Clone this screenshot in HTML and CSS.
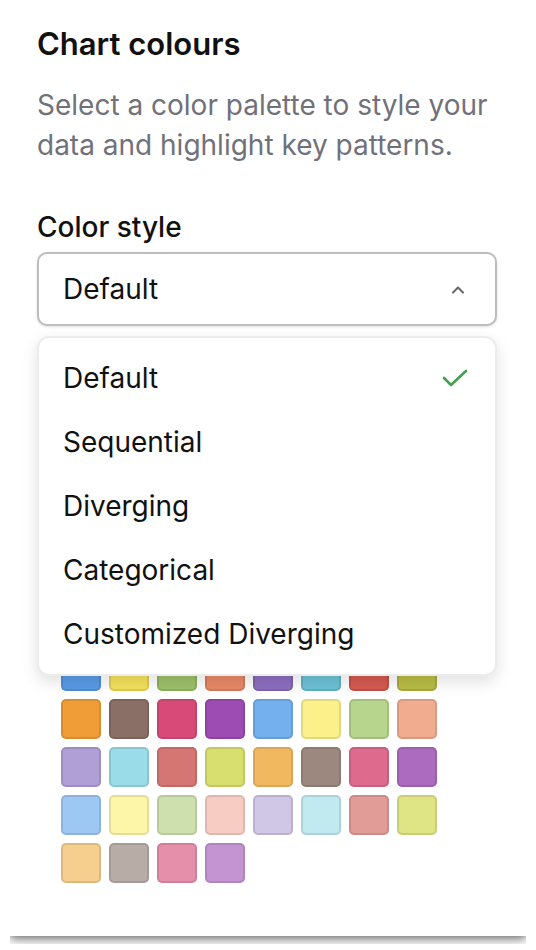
FILE: index.html
```html
<html>

<head>
  <meta name="viewport" content="width=device-width, initial-scale=1">
  <link rel="stylesheet" href="styles.css">
</head>

<body>
  <div class="panel">
    <h2 class="panel-title">Chart colours</h2>
    <p class="panel-desc">Select a color palette to style your data and highlight key patterns.</p>

    <div class="field-label">Color style</div>
    <div class="select">
      <button class="select-trigger">
        <span>Default</span>
        <svg class="chevron" width="14" height="9" viewBox="0 0 14 9">
          <path d="M2 7.5 L7 2.5 L12 7.5" fill="none" stroke="#666" stroke-width="2" stroke-linecap="round" stroke-linejoin="round" />
        </svg>
      </button>

      <ul class="select-menu">
        <li class="option selected">
          Default
          <svg class="check" width="28" height="20" viewBox="0 0 28 20">
            <path d="M3 10 L10 17 L25 3" fill="none" stroke="#43a04f" stroke-width="2.6" stroke-linecap="round" stroke-linejoin="round" />
          </svg>
        </li>
        <li class="option">Sequential</li>
        <li class="option">Diverging</li>
        <li class="option">Categorical</li>
        <li class="option">Customized Diverging</li>
      </ul>
    </div>

    <div class="swatches">
      <div class="swatch" style="background:#5a9be6"></div>
      <div class="swatch" style="background:#f5e35c"></div>
      <div class="swatch" style="background:#9dc16b"></div>
      <div class="swatch" style="background:#e98a68"></div>
      <div class="swatch" style="background:#8c6fc0"></div>
      <div class="swatch" style="background:#6cc3d5"></div>
      <div class="swatch" style="background:#d65a50"></div>
      <div class="swatch" style="background:#b9bd45"></div>

      <div class="swatch" style="background:#f09d38"></div>
      <div class="swatch" style="background:#8a6f66"></div>
      <div class="swatch" style="background:#d84b78"></div>
      <div class="swatch" style="background:#9d4cb3"></div>
      <div class="swatch" style="background:#74b0ee"></div>
      <div class="swatch" style="background:#fbf08a"></div>
      <div class="swatch" style="background:#b7d58c"></div>
      <div class="swatch" style="background:#f1ac90"></div>

      <div class="swatch" style="background:#b09fd6"></div>
      <div class="swatch" style="background:#9adce8"></div>
      <div class="swatch" style="background:#d57672"></div>
      <div class="swatch" style="background:#d8df6e"></div>
      <div class="swatch" style="background:#f2b860"></div>
      <div class="swatch" style="background:#9d8880"></div>
      <div class="swatch" style="background:#de6a8e"></div>
      <div class="swatch" style="background:#ac6bbf"></div>

      <div class="swatch" style="background:#9dc8f3"></div>
      <div class="swatch" style="background:#fdf6a9"></div>
      <div class="swatch" style="background:#cde0ae"></div>
      <div class="swatch" style="background:#f7cdc3"></div>
      <div class="swatch" style="background:#d0c6e6"></div>
      <div class="swatch" style="background:#c0eaf0"></div>
      <div class="swatch" style="background:#e29c98"></div>
      <div class="swatch" style="background:#dfe584"></div>

      <div class="swatch" style="background:#f6cf8e"></div>
      <div class="swatch" style="background:#b8aca7"></div>
      <div class="swatch" style="background:#e68fab"></div>
      <div class="swatch" style="background:#c494d2"></div>
    </div>
  </div>
</body>

</html>
```

FILE: styles.css
```css
body {
  margin: 6px 10px;
  background-color: white;
  font-family: Inter, "Noto Sans", sans-serif;
  color: #111;
}

.panel {
  height: 930px;
  box-sizing: border-box;
  padding: 21px 27px 0;
  background-color: white;
  box-shadow: 0 4px 10px rgba(0, 0, 0, 0.4), 0 0 7px rgba(0, 0, 0, 0.35);
}

.panel-title {
  margin: 0;
  font-size: 31px;
  font-weight: 600;
  line-height: 34px;
}

.panel-desc {
  margin: 24px 0 0;
  font-size: 28px;
  line-height: 40px;
  color: #71717a;
}

.field-label {
  margin-top: 45px;
  font-size: 28px;
  font-weight: 500;
  line-height: 34px;
}

.select {
  position: relative;
  margin-top: 8px;
  width: 460px;
}

.select-trigger {
  display: flex;
  align-items: center;
  justify-content: space-between;
  width: 100%;
  height: 74px;
  padding: 0 30px 0 24px;
  border: 2px solid #bdbdbd;
  border-radius: 10px;
  background: white;
  box-shadow: 0 1px 3px rgba(0, 0, 0, 0.12);
  font-family: inherit;
  font-size: 28px;
  color: #111;
}

.select-menu {
  position: absolute;
  top: calc(100% + 10px);
  left: 0;
  right: 0;
  z-index: 2;
  margin: 0;
  padding: 8px 0;
  list-style: none;
  background: white;
  border: 2px solid #ececec;
  border-radius: 12px;
  box-shadow: 0 6px 16px rgba(0, 0, 0, 0.12);
}

.option {
  display: flex;
  align-items: center;
  justify-content: space-between;
  height: 64px;
  padding: 0 26px 0 24px;
  font-size: 28px;
}

.swatches {
  display: grid;
  grid-template-columns: repeat(8, 40px);
  gap: 8px;
  margin: 325px 0 0 24px;
}

.swatch {
  height: 40px;
  border-radius: 5px;
  box-shadow: inset 0 0 0 2px rgba(0, 0, 0, 0.1);
}
```
